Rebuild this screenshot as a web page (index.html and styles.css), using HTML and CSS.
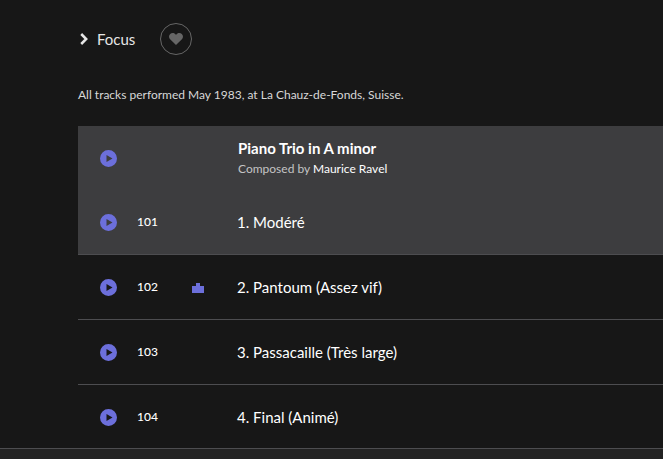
FILE: index.html
```
<!DOCTYPE html>
<html lang="en">
  <head>
    <meta charset="UTF-8" />
    <meta name="viewport" content="width=device-width, initial-scale=1" />
    <title>Piano Trio in A minor</title>
    <link rel="stylesheet" href="styles.css">
  </head>
  <body>
    <svg class="sprite" aria-hidden="true">
      <symbol id="icon-play" viewBox="0 0 17 17">
        <path fill-rule="evenodd" d="M8.500 0a8.500 8.500 0 1 1 0 17a8.500 8.500 0 0 1 0-17zM6.500 5v7l6-3.500z" />
      </symbol>
    </svg>
    <div class="layout">
      <main class="content">
        <div class="toolbar">
          <button class="focus-button" type="button">
            <svg class="chevron" viewBox="0 0 8 12"><path d="M1.200 1l5 5-5 5" stroke-width="2.500" /></svg>
            Focus
          </button>
          <button class="like-button" type="button" aria-label="Like">
            <svg class="heart" viewBox="0 0 14 12"><path d="M7 12L1.100 6.300C-.4 4.700-.3 2.200 1.200.9 2.900-.5 5.500-.3 7 1.900 8.500-.3 11.100-.5 12.800.9c1.500 1.300 1.600 3.800.1 5.400z" /></svg>
          </button>
        </div>
        <p class="notes">All tracks performed May 1983, at La Chauz-de-Fonds, Suisse.</p>
        <table class="tracks">
          <colgroup>
            <col class="col-play">
            <col class="col-number">
            <col class="col-popular">
            <col>
          </colgroup>
          <tbody>
            <tr class="work">
              <td class="play-cell"><button class="play-button" type="button" aria-label="Play work"><svg><use href="#icon-play" /></svg></button></td>
              <td></td>
              <td></td>
              <td class="work-cell">
                <div class="work-title">Piano Trio in A minor</div>
                <div class="composer">Composed by <a href="#">Maurice Ravel</a></div>
              </td>
            </tr>
            <tr class="track active">
              <td class="play-cell"><button class="play-button" type="button" aria-label="Play track 101"><svg><use href="#icon-play" /></svg></button></td>
              <td class="number">101</td>
              <td></td>
              <td class="title">1. Modéré</td>
            </tr>
            <tr class="track">
              <td class="play-cell"><button class="play-button" type="button" aria-label="Play track 102"><svg><use href="#icon-play" /></svg></button></td>
              <td class="number">102</td>
              <td><svg class="popular" viewBox="0 0 12 12"><path d="M0 5h4V2h4v3h4v7H0z" /></svg></td>
              <td class="title">2. Pantoum (Assez vif)</td>
            </tr>
            <tr class="track">
              <td class="play-cell"><button class="play-button" type="button" aria-label="Play track 103"><svg><use href="#icon-play" /></svg></button></td>
              <td class="number">103</td>
              <td></td>
              <td class="title">3. Passacaille (Très large)</td>
            </tr>
            <tr class="track">
              <td class="play-cell"><button class="play-button" type="button" aria-label="Play track 104"><svg><use href="#icon-play" /></svg></button></td>
              <td class="number">104</td>
              <td></td>
              <td class="title">4. Final (Animé)</td>
            </tr>
          </tbody>
        </table>
      </main>
      <footer class="player"></footer>
    </div>
  </body>
</html>
```

FILE: styles.css
```
* {
  box-sizing: border-box;
}
body {
  margin: 0;
  font-family: Lato, "Liberation Sans", sans-serif;
  font-size: 15px;
  color: #fff;
  background-color: #171717;
}
button {
  padding: 0;
  border: none;
  background: none;
  color: inherit;
  font: inherit;
  cursor: pointer;
}
svg {
  display: block;
}
.sprite {
  display: none;
}
.layout {
  display: flex;
  flex-direction: column;
  height: 100vh;
}
.content {
  flex: 1;
  min-height: 0;
  overflow: hidden;
  padding: 23px 0 0 78px;
}
.toolbar {
  display: flex;
  align-items: center;
  gap: 25px;
}
.focus-button {
  display: flex;
  align-items: center;
  gap: 9px;
  padding-left: 2px;
  color: #e6e6e6;
}
.chevron {
  width: 8px;
  height: 12px;
  fill: none;
  stroke: #e6e6e6;
}
.like-button {
  display: flex;
  align-items: center;
  justify-content: center;
  width: 32px;
  height: 32px;
  border: 1px solid #666;
  border-radius: 50%;
}
.heart {
  width: 14px;
  height: 12px;
  fill: #666;
}
.notes {
  margin: 32px 0 23px;
  font-size: 12px;
  line-height: 16px;
  color: #d8d8d8;
}
.tracks {
  width: 100%;
  table-layout: fixed;
  border-spacing: 0;
}
.col-play {
  width: 59px;
}
.col-number {
  width: 55px;
}
.col-popular {
  width: 45px;
}
td {
  padding: 0;
  vertical-align: middle;
}
.work {
  height: 64px;
  background-color: #3d3d3f;
}
.work-cell {
  padding: 1px 0 0 1px;
}
.work-title {
  font-weight: bold;
  line-height: 20px;
}
.composer {
  margin-top: 1px;
  font-size: 12px;
  line-height: 20px;
  color: #c4c4c4;
}
.composer a {
  color: #fff;
  text-decoration: none;
}
.composer a:hover {
  text-decoration: underline;
}
.track {
  height: 65px;
}
.track td {
  border-bottom: 1px solid #4d4d50;
}
.track.active {
  background-color: #3d3d3f;
}
.play-cell {
  padding-left: 22px;
}
.play-button {
  display: block;
}
.play-button svg {
  width: 17px;
  height: 17px;
  fill: #6c6fdb;
}
.number {
  padding-bottom: 2px;
  font-size: 12px;
  font-weight: 500;
}
.popular {
  width: 12px;
  height: 12px;
  fill: #6c6fdb;
}
.player {
  flex: none;
  height: 11px;
  border-top: 1px solid #4d4d50;
  background-color: #222;
}
```
